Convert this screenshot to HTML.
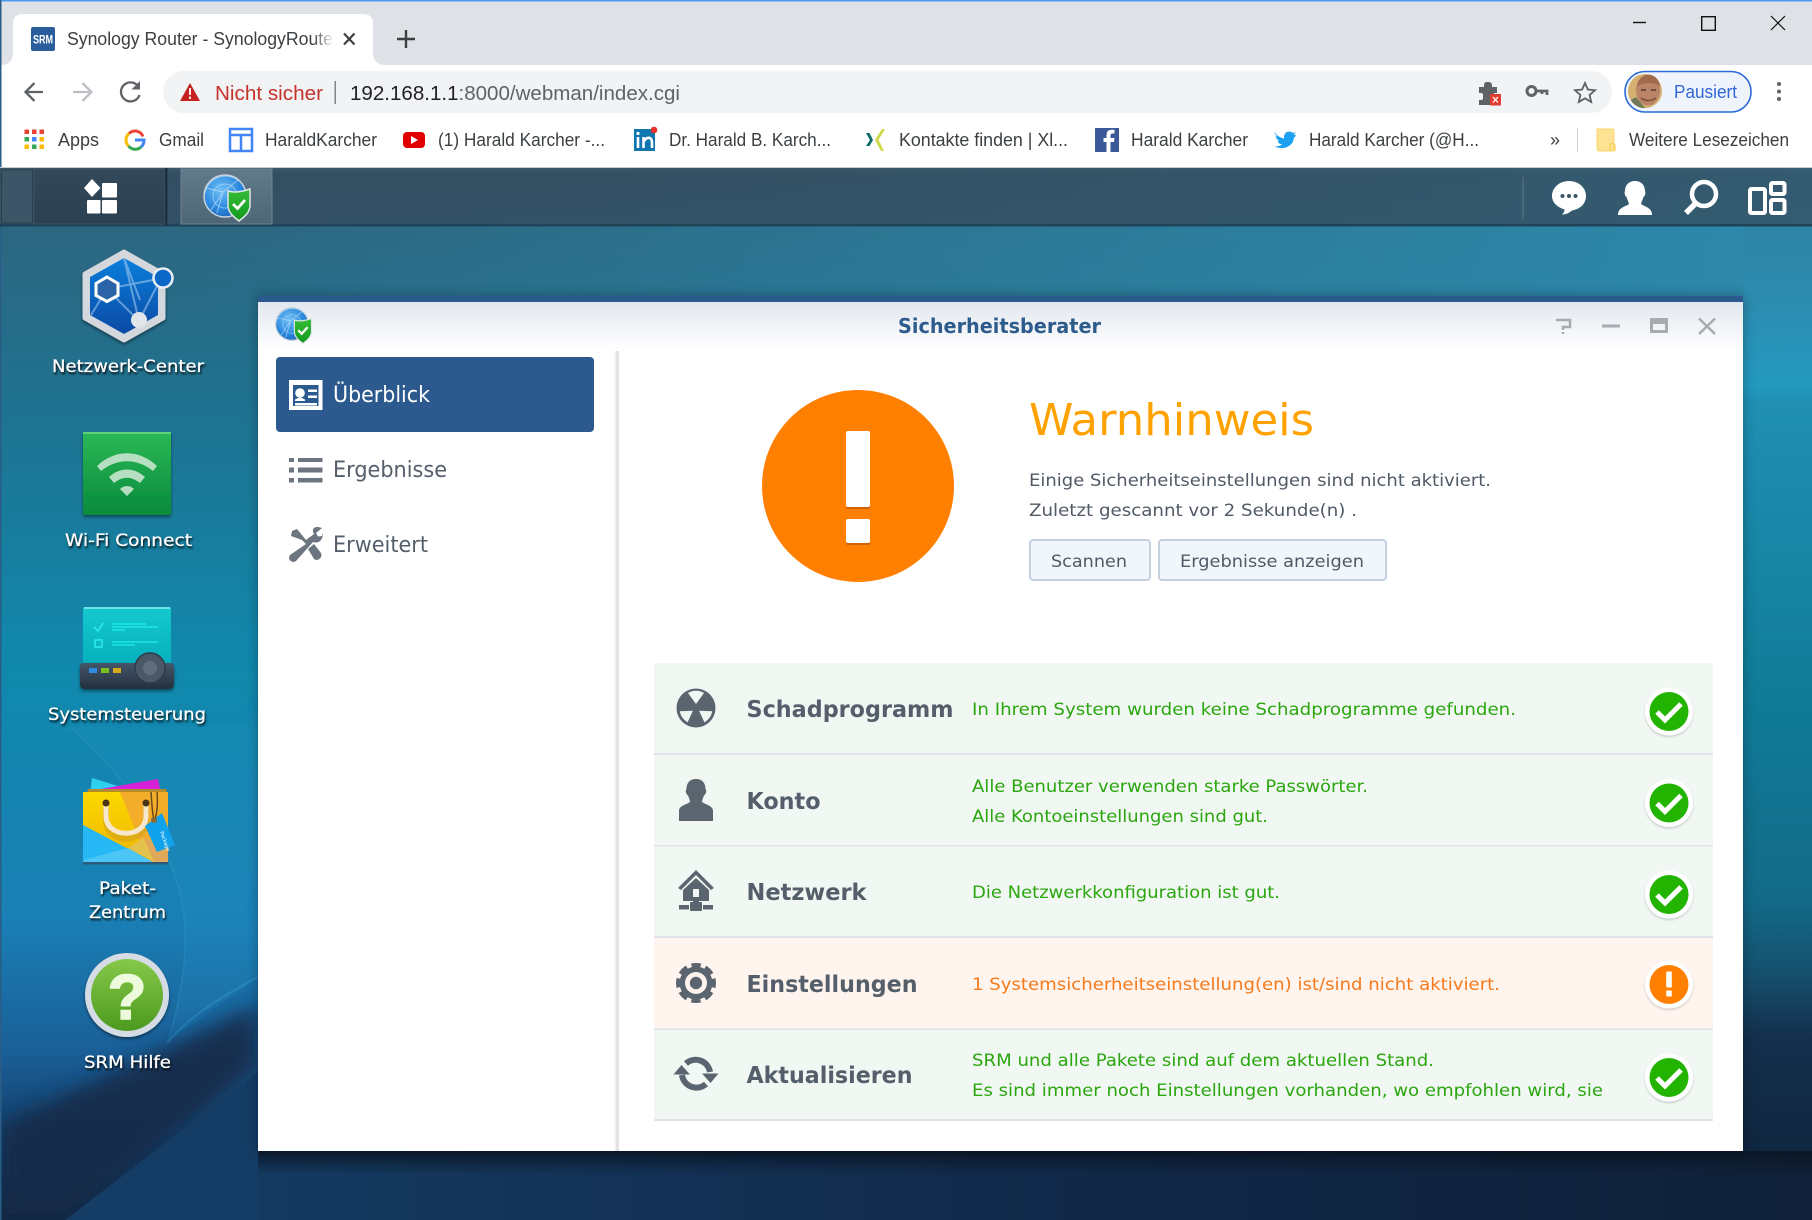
<!DOCTYPE html>
<html><head><meta charset="utf-8"><title>Synology Router - SynologyRouter</title>
<style>
html,body{margin:0;padding:0;width:1812px;height:1220px;overflow:hidden;background:#10263f}
svg{display:block}
text{white-space:pre}
.c{font-family:"Liberation Sans",sans-serif;font-size:18px;fill:#3c4043}
.d{font-family:"DejaVu Sans",sans-serif}
.l{font-family:"DejaVu Sans",sans-serif;font-size:17px;fill:#fff;stroke:#fff;stroke-width:.25px;text-anchor:start;filter:drop-shadow(1px 2px 1px rgba(0,0,0,.85))}
.n{font-family:"DejaVu Sans",sans-serif;font-weight:700;font-size:23px;fill:#555f6b}
.g{font-family:"DejaVu Sans",sans-serif;font-size:17px;fill:#2ba60f}
.s{font-family:"DejaVu Sans",sans-serif;font-size:22px;fill:#555f6b}
.b{font-family:"DejaVu Sans",sans-serif;font-size:17px;fill:#505a66}
</style></head><body>
<svg xmlns="http://www.w3.org/2000/svg" width="1812" height="1220" viewBox="0 0 1812 1220">
<defs>
<linearGradient id="bg" x1="0" y1="226" x2="0" y2="1220" gradientUnits="userSpaceOnUse">
<stop offset="0" stop-color="#2d6680"/><stop offset=".18" stop-color="#1f7290"/><stop offset=".45" stop-color="#1089ad"/><stop offset=".7" stop-color="#1a7fb5"/><stop offset=".83" stop-color="#1a5f98"/><stop offset=".93" stop-color="#123a62"/><stop offset="1" stop-color="#10263f"/>
</linearGradient>
<linearGradient id="rt" x1="0" y1="226" x2="0" y2="1160" gradientUnits="userSpaceOnUse">
<stop offset="0" stop-color="#2e84a5"/><stop offset=".08" stop-color="#2c8cb0"/><stop offset=".17" stop-color="#2499bf"/><stop offset=".19" stop-color="#1f8fb3"/><stop offset=".5" stop-color="#107c98"/><stop offset=".72" stop-color="#126a88"/><stop offset=".8" stop-color="#14506e"/><stop offset=".87" stop-color="#132f4c"/><stop offset="1" stop-color="#10263f"/>
</linearGradient>
<linearGradient id="band" x1="200" y1="0" x2="1743" y2="0" gradientUnits="userSpaceOnUse"><stop offset="0" stop-color="#2d88aa" stop-opacity="0"/><stop offset="1" stop-color="#2d88aa"/></linearGradient>
<linearGradient id="bot" x1="258" y1="0" x2="1812" y2="0" gradientUnits="userSpaceOnUse"><stop offset="0" stop-color="#143a60"/><stop offset=".5" stop-color="#11294a"/><stop offset="1" stop-color="#0f2038"/></linearGradient>
<linearGradient id="botd" x1="0" y1="1151" x2="0" y2="1175" gradientUnits="userSpaceOnUse"><stop offset="0" stop-color="#0b1422" stop-opacity=".8"/><stop offset="1" stop-color="#0b1422" stop-opacity="0"/></linearGradient>
<linearGradient id="bar" x1="0" y1="168" x2="0" y2="226" gradientUnits="userSpaceOnUse"><stop offset="0" stop-color="#3b5769"/><stop offset=".1" stop-color="#334e62"/><stop offset="1" stop-color="#335166"/></linearGradient>
<linearGradient id="barR" x1="0" y1="0" x2="1812" y2="0" gradientUnits="userSpaceOnUse"><stop offset="0" stop-color="#33505f" stop-opacity="0"/><stop offset="1" stop-color="#356077" stop-opacity=".7"/></linearGradient>
<linearGradient id="menu" x1="0" y1="168" x2="0" y2="226" gradientUnits="userSpaceOnUse"><stop offset="0" stop-color="#33495a"/><stop offset="1" stop-color="#2b4050"/></linearGradient>
<linearGradient id="act" x1="0" y1="168" x2="0" y2="226" gradientUnits="userSpaceOnUse"><stop offset="0" stop-color="#627a8a"/><stop offset="1" stop-color="#4d6676"/></linearGradient>
<linearGradient id="tb" x1="0" y1="302" x2="0" y2="350" gradientUnits="userSpaceOnUse"><stop offset="0" stop-color="#e2e7ef"/><stop offset="1" stop-color="#fff"/></linearGradient>
<linearGradient id="div" x1="614" y1="0" x2="619" y2="0" gradientUnits="userSpaceOnUse"><stop offset="0" stop-color="#fff"/><stop offset=".7" stop-color="#dcdcdc"/><stop offset="1" stop-color="#eee"/></linearGradient>
<radialGradient id="globe" cx=".4" cy=".35" r=".75"><stop offset="0" stop-color="#6fc0f5"/><stop offset=".6" stop-color="#2b88de"/><stop offset="1" stop-color="#1c62b8"/></radialGradient>
<linearGradient id="shield" x1="0" y1="0" x2="0" y2="1"><stop offset="0" stop-color="#35bd37"/><stop offset="1" stop-color="#139a1f"/></linearGradient>
<linearGradient id="hexb" x1="0" y1="0" x2="0" y2="1"><stop offset="0" stop-color="#0a7fdc"/><stop offset="1" stop-color="#0b4aa4"/></linearGradient>
<linearGradient id="wifi" x1="0" y1="0" x2="0" y2="1"><stop offset="0" stop-color="#2cb856"/><stop offset="1" stop-color="#088a3c"/></linearGradient>
<linearGradient id="sys" x1="0" y1="0" x2="0" y2="1"><stop offset="0" stop-color="#15c9cf"/><stop offset="1" stop-color="#05b0bc"/></linearGradient>
<linearGradient id="base" x1="0" y1="0" x2="0" y2="1"><stop offset="0" stop-color="#45566a"/><stop offset="1" stop-color="#232f3e"/></linearGradient>
<linearGradient id="help" x1="0" y1="0" x2="0" y2="1"><stop offset="0" stop-color="#86c84a"/><stop offset="1" stop-color="#4c9a1e"/></linearGradient>
<linearGradient id="bag" x1="0" y1="0" x2="0" y2="1"><stop offset="0" stop-color="#fbd800"/><stop offset="1" stop-color="#efb400"/></linearGradient>
<linearGradient id="fade" x1="0" y1="0" x2="1" y2="0"><stop offset="0" stop-color="#fff" stop-opacity="0"/><stop offset="1" stop-color="#fff"/></linearGradient>
<filter id="blur6" x="-20%" y="-20%" width="140%" height="140%"><feGaussianBlur stdDeviation="6"/></filter>
<filter id="blur12" x="-30%" y="-30%" width="160%" height="160%"><feGaussianBlur stdDeviation="10"/></filter>
<filter id="sh" x="-20%" y="-20%" width="140%" height="140%"><feDropShadow dx="0" dy="1.5" stdDeviation="1" flood-color="#000" flood-opacity=".18"/></filter>
<filter id="ish" x="-20%" y="-20%" width="140%" height="140%"><feDropShadow dx="0" dy="2" stdDeviation="1.5" flood-color="#000" flood-opacity=".45"/></filter>
<g id="ok"><circle r="24" fill="#fff" filter="url(#sh)"/><circle r="19.5" fill="#22b400"/><path d="M-12 .5L-4 8.500L12 -7.500" fill="none" stroke="#fff" stroke-width="5"/></g>
<g id="gs"><circle cx="0" cy="0" r="21" fill="url(#globe)" stroke="#c8d3dc" stroke-width="1.5"/><path d="M-20 -3A21 21 0 0 1 14 -15M-14 14L-2 -4L13 -16M-2 -4L-19 -8M-2 -4L-8 17" fill="none" stroke="#cfe9fb" stroke-width="1" opacity=".6"/><circle r="12" fill="none" stroke="#cfe9fb" stroke-width="1" opacity=".5"/><path d="M3 -5C9 -3 16 -4 25 -7V9C25 17 19 21 14 25C9 21 3 17 3 9Z" fill="url(#shield)" stroke="#dfe5e8" stroke-width="1.5"/><path d="M8 8L12.500 12.500L20 4" fill="none" stroke="#fff" stroke-width="2.800"/></g>
</defs>

<!-- desktop background -->
<rect width="1812" height="1220" fill="url(#bg)"/>
<rect x="200" y="226" width="1543" height="90" fill="url(#band)"/>
<path d="M1743 226H1812V1160H1743Z" fill="url(#rt)"/>
<path d="M70 727C130 780 190 860 185 950C183 985 175 1020 167 1043L258 977V727Z" fill="#2a9bd0" opacity=".16"/>
<path d="M70 727C130 780 190 860 185 950C183 985 175 1020 167 1043" fill="none" stroke="#45b6e2" stroke-width="1.500" opacity=".2"/>
<path d="M258 977C225 995 190 1015 167 1043" fill="none" stroke="#3fb3e0" stroke-width="2" opacity=".3"/>
<path d="M0 1125L258 1005V1070L65 1220H0Z" fill="#12294a" opacity=".92" filter="url(#blur12)"/>
<path d="M65 1220L258 1072V1220Z" fill="#143c64"/>
<rect x="258" y="1151" width="1554" height="69" fill="url(#bot)"/>
<rect x="258" y="1151" width="1554" height="24" fill="url(#botd)"/>
<rect x="0" y="0" width="1.500" height="1220" fill="#2a5d86"/>

<!-- desktop icons -->
<g>
<path d="M124 252L163 274V318L124 340L85 318V274Z" fill="#d4d8dc" stroke="#d4d8dc" stroke-width="5" stroke-linejoin="round" filter="url(#ish)"/>
<path d="M124 258L158 277V315L124 334L90 315V277Z" fill="url(#hexb)"/>
<path d="M124 258L139 321M124 258L140 300M107 289L91 315M107 289L139 321M107 289L163 278M139 321L160 280" fill="none" stroke="#9fc6ec" stroke-width="2" opacity=".6"/>
<path d="M107 277L118 283.500V295.500L107 301.500L96 295.500V283.500Z" fill="#2a64a6" stroke="#fff" stroke-width="3"/>
<circle cx="163" cy="278" r="9.500" fill="#0c68c8" stroke="#e9eef3" stroke-width="2.500"/>
<circle cx="139" cy="320" r="8" fill="#e2e6ea"/>
<text class="l" x="52" y="372" textLength="152" lengthAdjust="spacingAndGlyphs">Netzwerk-Center</text>

<rect x="83" y="432" width="88" height="83" rx="2" fill="url(#wifi)" filter="url(#ish)"/>
<rect x="83" y="432" width="88" height="2" fill="#5ed27e"/>
<path d="M97 466C115 449 139 449 157 466L153 471C137 458 117 458 101 471Z" fill="#b5dfc0"/>
<path d="M109 477C120 467 134 467 145 477L140 483C131 476 123 476 114 483Z" fill="#b5dfc0"/>
<path d="M120 489C124 485 130 485 134 489L127 496Z" fill="#b5dfc0"/>
<text class="l" x="65" y="546" textLength="127" lengthAdjust="spacingAndGlyphs">Wi-Fi Connect</text>

<path d="M85 607H169Q171 607 171 609V665H83V609Q83 607 85 607Z" fill="url(#sys)"/>
<rect x="84" y="607" width="86" height="2" fill="#6be4e6"/>
<path d="M94 627L98 631L103 623" fill="none" stroke="#2ceae8" stroke-width="1.800"/>
<path d="M112 624H146M112 627H158M112 630H125M112 642H158M112 645H135" stroke="#1ff0ee" stroke-width="1.300" fill="none"/>
<rect x="95" y="640" width="7" height="7" fill="none" stroke="#2ceae8" stroke-width="1.600"/>
<path d="M84 663H170Q174 663 174 667V684Q174 689 169 689H85Q80 689 80 684V667Q80 663 84 663Z" fill="url(#base)" filter="url(#ish)"/>
<rect x="89" y="668" width="8" height="5" fill="#2d8be2"/><rect x="101" y="668" width="8" height="5" fill="#79bf1e"/><rect x="113" y="668" width="8" height="5" fill="#d7a71c"/>
<circle cx="150" cy="668" r="15" fill="#4a5868" stroke="#2f3b49" stroke-width="1.500"/><circle cx="150" cy="668" r="7" fill="#5f6d7d"/>
<text class="l" x="48" y="720" textLength="158" lengthAdjust="spacingAndGlyphs">Systemsteuerung</text>

<path d="M92 778L118 786L112 794H90Z" fill="#2fd0ef"/>
<path d="M95 790L158 779L161 794H96Z" fill="#d820d8"/>
<path d="M88 789H166L167 793H87Z" fill="#b58c2b"/>
<rect x="83" y="792" width="85" height="72" rx="1" fill="url(#bag)"/>
<path d="M120 792H168V864H150L144 852Z" fill="#f3ad2b"/>
<path d="M83 825L153 862H83Z" fill="#25b8f4"/>
<path d="M83 860L128 848L153 862H84Z" fill="#4bc6f6"/>
<path d="M128 848L143 838L155 862Z" fill="#e4c24e"/>
<path d="M144 838L168 844V864H155Z" fill="#e0a85a"/>
<rect x="83" y="862" width="85" height="2.500" fill="#2d5a78"/>
<path d="M106 805V816C106 841 146 841 146 816V805" fill="none" stroke="#d2a01a" stroke-width="6" opacity=".6" transform="translate(0,4)"/>
<path d="M106 805V816C106 839 146 839 146 816V805" fill="none" stroke="#f6e7cd" stroke-width="5"/>
<circle cx="106" cy="803" r="3.500" fill="#4a3416"/><circle cx="146" cy="803" r="3.500" fill="#4a3416"/>
<path d="M151 792C152 805 152 812 154 820M157 792C158 805 157 812 155 820" fill="none" stroke="#6a4a18" stroke-width="1.500"/>
<path d="M145 826L162 813L175 845L157 852Z" fill="#10a3ec"/>
<circle cx="154" cy="820" r="3" fill="#8a6a2a"/>
<text class="d" x="0" y="0" font-size="5" fill="#fff" transform="translate(160,832) rotate(70)">Package</text>
<text class="l" x="99" y="894" textLength="57" lengthAdjust="spacingAndGlyphs">Paket-</text>
<text class="l" x="89" y="918" textLength="77" lengthAdjust="spacingAndGlyphs">Zentrum</text>

<circle cx="127" cy="995" r="42" fill="#d6dce4" filter="url(#ish)"/>
<circle cx="127" cy="995" r="36" fill="url(#help)"/>
<text x="127" y="1019" text-anchor="middle" font-family="Liberation Sans,sans-serif" font-weight="700" font-size="64" fill="#edfbdc" stroke="#edfbdc" stroke-width="1.500">?</text>
<text class="l" x="84" y="1068" textLength="87" lengthAdjust="spacingAndGlyphs">SRM Hilfe</text>
</g>

<!-- browser chrome -->
<rect y="0" width="1812" height="168" fill="#fff"/>
<rect y="0" width="1812" height="65" fill="#dee1e6"/>
<rect y="0" width="1812" height="1.500" fill="#4a9bf0"/>
<rect y="0" width="1.500" height="168" fill="#2a5d86"/>
<path d="M1 65Q11 65 13 55V24Q13 14 23 14H363Q373 14 373 24V55Q375 65 385 65Z" fill="#fff"/>
<rect x="31" y="27" width="24" height="24" rx="2" fill="#2a5d9c"/>
<text x="33" y="43.500" font-family="Liberation Sans,sans-serif" font-size="11.500" font-weight="700" fill="#fff" textLength="20" lengthAdjust="spacingAndGlyphs">SRM</text>
<text class="c" x="67" y="45" textLength="266" lengthAdjust="spacingAndGlyphs">Synology Router - SynologyRoute</text>
<rect x="313" y="24" width="21" height="30" fill="url(#fade)"/>
<path d="M344 33.500L354.500 44.500M354.500 33.500L344 44.500" stroke="#3c4043" stroke-width="2.200" fill="none"/>
<path d="M406 30V48M397 39H415" stroke="#3c4043" stroke-width="2.400" fill="none"/>
<path d="M1633 22.500H1646" stroke="#111" stroke-width="1.400"/>
<rect x="1701.700" y="16.700" width="13.600" height="13.600" fill="none" stroke="#111" stroke-width="1.400"/>
<path d="M1771 16L1785 30M1785 16L1771 30" stroke="#111" stroke-width="1.200" fill="none"/>

<path d="M43 92H27M34.500 83L25.500 92L34.500 101" fill="none" stroke="#5f6368" stroke-width="2.300"/>
<path d="M73 92H90M82.500 83L91.500 92L82.500 101" fill="none" stroke="#bcc0c4" stroke-width="2.300"/>
<path d="M138 86A9.500 9.500 0 1 0 139.500 95" fill="none" stroke="#5f6368" stroke-width="2.300"/><path d="M140 81V89.500H131.500Z" fill="#5f6368"/>
<rect x="163" y="71" width="1449" height="42" rx="21" fill="#f1f3f4"/>
<path d="M190 83L200 101H180Z" fill="#c5221f"/><path d="M190 88V95M190 96.500V99" stroke="#fff" stroke-width="1.800"/>
<text class="c" x="215" y="100" style="font-size:20px;fill:#c5332b" textLength="108" lengthAdjust="spacingAndGlyphs">Nicht sicher</text>
<rect x="334.500" y="81" width="1.500" height="23" fill="#80868b"/>
<text class="c" x="350" y="100" style="font-size:20px;fill:#5f6368" textLength="330" lengthAdjust="spacingAndGlyphs"><tspan fill="#202124">192.168.1.1</tspan>:8000/webman/index.cgi</text>
<path d="M1479 87H1484C1484 83 1484 82 1488 82C1492 82 1492 84 1492 87H1497V93C1494 93 1493 93 1493 96.500C1493 100 1494 100 1497 100V105H1479V100C1483 100 1483 100 1483 96.500C1483 93 1483 93 1479 93Z" fill="#5f6368"/>
<rect x="1490" y="94" width="11" height="11.500" fill="#e03c32"/><path d="M1493 97L1498 102.500M1498 97L1493 102.500" stroke="#fff" stroke-width="1.300"/>
<circle cx="1531.500" cy="91" r="4.500" fill="none" stroke="#5f6368" stroke-width="3"/><path d="M1536 91H1547V95M1542 91V94" fill="none" stroke="#5f6368" stroke-width="2.800"/>
<path d="M1585 83L1587.800 89.500L1595 90.200L1589.600 95L1591.200 102L1585 98.300L1578.800 102L1580.400 95L1575 90.200L1582.200 89.500Z" fill="none" stroke="#5f6368" stroke-width="1.800"/>
<rect x="1625" y="71.500" width="126" height="40.500" rx="20" fill="#eef3fc" stroke="#2a6bd6" stroke-width="1.600"/>
<circle cx="1645" cy="91" r="17" fill="#d4b070"/>
<path d="M1631 100C1632 104 1640 109 1645 108L1636 97Z" fill="#6f7858"/>
<ellipse cx="1648" cy="90" rx="12" ry="15.500" fill="#b98468"/>
<path d="M1637 86Q1640 74 1650 75Q1658 76 1660 86Q1650 80 1637 86Z" fill="#a06a4c"/>
<path d="M1641 98Q1648 103 1656 98" stroke="#7a4c34" stroke-width="1.500" fill="none"/>
<path d="M1641 90H1646M1651 90H1656" stroke="#5b3c2a" stroke-width="1.500"/>
<text class="c" x="1674" y="98" style="font-size:18px;fill:#3367d6" textLength="63" lengthAdjust="spacingAndGlyphs">Pausiert</text>
<circle cx="1779" cy="84" r="2" fill="#5f6368"/><circle cx="1779" cy="91.500" r="2" fill="#5f6368"/><circle cx="1779" cy="99" r="2" fill="#5f6368"/>

<!-- bookmarks -->
<g>
<rect x="24.500" y="129.500" width="4.500" height="4.500" fill="#ea4335"/><rect x="32" y="129.500" width="4.500" height="4.500" fill="#ea4335"/><rect x="39.500" y="129.500" width="4.500" height="4.500" fill="#ea4335"/>
<rect x="24.500" y="137" width="4.500" height="4.500" fill="#34a853"/><rect x="32" y="137" width="4.500" height="4.500" fill="#4285f4"/><rect x="39.500" y="137" width="4.500" height="4.500" fill="#fbbc05"/>
<rect x="24.500" y="144.500" width="4.500" height="4.500" fill="#fbbc05"/><rect x="32" y="144.500" width="4.500" height="4.500" fill="#34a853"/><rect x="39.500" y="144.500" width="4.500" height="4.500" fill="#fbbc05"/>
</g>
<text class="c" x="58" y="146" textLength="41" lengthAdjust="spacingAndGlyphs">Apps</text>
<path d="M143 136.500A8.500 8.500 0 0 0 129 133.500" fill="none" stroke="#ea4335" stroke-width="3"/>
<path d="M129 133.500A8.500 8.500 0 0 0 128.500 146" fill="none" stroke="#fbbc05" stroke-width="3"/>
<path d="M128.500 146A8.500 8.500 0 0 0 141 147" fill="none" stroke="#34a853" stroke-width="3"/>
<path d="M141 147A8.500 8.500 0 0 0 144 140H135" fill="none" stroke="#4285f4" stroke-width="3"/>
<text class="c" x="159" y="146" textLength="45" lengthAdjust="spacingAndGlyphs">Gmail</text>
<rect x="230" y="129" width="22" height="22" fill="none" stroke="#4285f4" stroke-width="2.500"/>
<path d="M230 135H252M241 135V151" stroke="#4285f4" stroke-width="2.500" fill="none"/>
<text class="c" x="265" y="146" textLength="112" lengthAdjust="spacingAndGlyphs">HaraldKarcher</text>
<rect x="403" y="132" width="22" height="16" rx="4" fill="#e00000"/><path d="M411 136V144L418 140Z" fill="#fff"/>
<text class="c" x="438" y="146" textLength="167" lengthAdjust="spacingAndGlyphs">(1) Harald Karcher -...</text>
<rect x="634" y="129" width="21" height="22" fill="#0f76b0"/>
<path d="M638 137V148M643.500 148V137M643.500 142Q646 137 650 138Q652 139 652 143V148" fill="none" stroke="#fff" stroke-width="2.600"/><circle cx="638" cy="133.500" r="1.600" fill="#fff"/>
<circle cx="654" cy="130" r="3.300" fill="#e9312b"/>
<text class="c" x="669" y="146" textLength="162" lengthAdjust="spacingAndGlyphs">Dr. Harald B. Karch...</text>
<path d="M882 129L875 140L881 151H884L878.500 140L885 129Z" fill="#cfd848"/><path d="M866 133L870 140L866 146H869.500L873 140L869.500 133Z" fill="#0b6b66"/>
<text class="c" x="899" y="146" textLength="169" lengthAdjust="spacingAndGlyphs">Kontakte finden | Xl...</text>
<rect x="1095" y="128" width="24" height="24" fill="#3b5998"/><path d="M1110.500 152V142H1114L1114.500 138H1110.500V135.500Q1110.500 133.500 1112.500 133.500H1114.500V129.800H1111.500Q1106.500 129.800 1106.500 135V138H1103.500V142H1106.500V152Z" fill="#fff"/>
<text class="c" x="1131" y="146" textLength="117" lengthAdjust="spacingAndGlyphs">Harald Karcher</text>
<g transform="translate(1285,140) scale(.88) translate(-1288,-142)"><path d="M1276 133C1280 138 1284 140 1287 140C1286 134 1292 130 1297 134L1300 133L1298 136.500L1300.500 136C1300 138 1299 139 1298 139.500C1298 148 1287 155 1276 149C1280 149.500 1283 148.500 1285 147C1282 147 1280 145 1279.500 143H1282C1279 142 1277.500 139.500 1277.500 137.500L1280 138C1277 136 1276 134 1276 133Z" fill="#1da1f2"/></g>
<text class="c" x="1309" y="146" textLength="170" lengthAdjust="spacingAndGlyphs">Harald Karcher (@H...</text>
<text class="c" x="1550" y="146">»</text>
<rect x="1577" y="128" width="1" height="24" fill="#d0d3d6"/>
<path d="M1597 129H1612Q1614 129 1614 131V151H1599Q1597 151 1597 149Z" fill="#fde293" stroke="#fbd76a" stroke-width="1"/>
<path d="M1610 151V145Q1612 142 1615 145V151" fill="none" stroke="#f5c94e" stroke-width="1"/>
<text class="c" x="1629" y="146" textLength="160" lengthAdjust="spacingAndGlyphs">Weitere Lesezeichen</text>
<rect y="167" width="1812" height="1" fill="#c9ccd0"/>

<!-- DSM taskbar -->
<rect y="168" width="1812" height="58" fill="url(#bar)"/>
<rect y="168" width="1812" height="58" fill="url(#barR)"/>
<rect y="224" width="1812" height="2.500" fill="#1f4358"/>
<rect x="1.500" y="170" width="31" height="53" fill="#3d5566" stroke="#2b3f4d" stroke-width="1"/>
<rect x="34" y="169" width="131" height="55" fill="url(#menu)" stroke="#3d5363" stroke-width="1"/>
<rect x="165" y="168" width="2.500" height="58" fill="#1e3140"/>
<rect x="181" y="169" width="91" height="55" fill="url(#act)" stroke="#6d8493" stroke-width="1"/>
<path d="M92 179L100.500 188L92 197L84 188Z" fill="#fff"/>
<rect x="102" y="183" width="15" height="14.500" rx="1" fill="#fff"/>
<rect x="87" y="200" width="13.500" height="13.500" rx="1" fill="#fff"/>
<rect x="102" y="200" width="15" height="13.500" rx="1" fill="#fff"/>
<use href="#gs" transform="translate(225,196)"/>
<rect x="1522.500" y="177" width="1.200" height="42" fill="#5a7384"/>
<path d="M1569 181C1579 181 1586 188 1586 196C1586 204 1580 209 1572 210.500C1569 213 1566 214.500 1562 214.500C1564 212.500 1564.500 211 1564.500 209.500C1557 207 1552 202.500 1552 196C1552 188 1559 181 1569 181Z" fill="#fff"/>
<circle cx="1562.500" cy="196" r="2" fill="#3a5568"/><circle cx="1569" cy="196" r="2" fill="#3a5568"/><circle cx="1575.500" cy="196" r="2" fill="#3a5568"/>
<path d="M1635 181C1642 181 1645 186 1645 191C1646 193 1645 196 1643.500 197C1642.500 200 1641.500 202 1641 204C1645 207 1652 207.500 1652 215H1618C1618 207.500 1625 207 1629 204C1628.500 202 1627.500 200 1626.500 197C1625 196 1624 193 1625 191C1625 186 1628 181 1635 181Z" fill="#fff"/>
<circle cx="1704" cy="194" r="12" fill="none" stroke="#fff" stroke-width="4.500"/>
<path d="M1696 203L1686 213" stroke="#fff" stroke-width="5.500"/>
<rect x="1750" y="189" width="15" height="24" rx="1.500" fill="none" stroke="#fff" stroke-width="4"/>
<rect x="1771" y="183" width="13.500" height="11" rx="1.500" fill="none" stroke="#fff" stroke-width="4"/>
<rect x="1771" y="200" width="13.500" height="13" rx="1.500" fill="none" stroke="#fff" stroke-width="4"/>

<!-- window -->
<rect x="258" y="296" width="1485" height="855" fill="#000" opacity=".3" filter="url(#blur6)"/>
<rect x="258" y="296" width="1485" height="855" fill="#fff"/>
<rect x="258" y="296" width="1485" height="6" fill="#2c5a8e"/>
<rect x="258" y="302" width="1485" height="48" fill="url(#tb)"/>
<use href="#gs" transform="translate(292,324) scale(.78)"/>
<text class="d" x="898" y="333" font-size="20" font-weight="700" fill="#2d5c8c" textLength="203" lengthAdjust="spacingAndGlyphs">Sicherheitsberater</text>
<path d="M1556 320H1570V327H1563V330M1563 332V334" fill="none" stroke="#a7abb0" stroke-width="2.500"/>
<rect x="1602" y="324.500" width="18" height="3" fill="#a7abb0"/>
<path d="M1650 318H1668V333H1650ZM1653 324V330H1665V324Z" fill="#a7abb0" fill-rule="evenodd"/>
<path d="M1699 318.500L1715 334M1715 318.500L1699 334" stroke="#a7abb0" stroke-width="2.500" fill="none"/>
<rect x="614" y="351" width="5" height="800" fill="url(#div)"/>

<rect x="276" y="357" width="318" height="75" rx="4" fill="#2c5a8e"/>
<path d="M289 380H322.500V410H289ZM293 385V406H318.500V385Z" fill="#fff" fill-rule="evenodd"/>
<circle cx="300" cy="393" r="4.800" fill="#fff"/>
<path d="M295 403H317V405.500H295ZM308 389.500H317V392H308ZM308 395.500H317V398H308ZM295 399.500Q300 396 305 399.500V401H295Z" fill="#fff"/>
<text class="s" x="333" y="402" style="fill:#fff" textLength="97" lengthAdjust="spacingAndGlyphs">Überblick</text>
<path d="M289 458H294V462H289ZM298 458H322.500V462H298ZM289 467.500H294V472.500H289ZM298 467.500H322.500V472.500H298ZM289 478H294V482.500H289ZM298 478H322.500V482.500H298Z" fill="#6d7680"/>
<text class="s" x="333" y="477" textLength="114" lengthAdjust="spacingAndGlyphs">Ergebnisse</text>
<path d="M292 531L297 529L306 540L314 534C311 529 314 525 322 528L316 533L318 536.500L322 536L323 533C323 540 319 544 313 542L296 561C292 564 287 559 290 555L306 544L302 540L291 536Z" fill="#6d7680"/>
<path d="M308 549L314 544L321 553C323 557 318 562 314 559Z" fill="#6d7680"/>
<text class="s" x="333" y="552" textLength="95" lengthAdjust="spacingAndGlyphs">Erweitert</text>

<circle cx="858" cy="486" r="96" fill="#ff8000"/>
<rect x="846" y="431" width="24" height="78" rx="2" fill="#cf6400"/><rect x="846" y="431" width="24" height="76" rx="2" fill="#fff"/>
<rect x="846" y="519" width="24" height="26" rx="2" fill="#cf6400"/><rect x="846" y="519" width="24" height="24" rx="2" fill="#fff"/>
<text class="d" x="1029" y="435" font-size="44" fill="#ffa200" textLength="285" lengthAdjust="spacingAndGlyphs">Warnhinweis</text>
<text class="b" x="1029" y="486" textLength="462" lengthAdjust="spacingAndGlyphs">Einige Sicherheitseinstellungen sind nicht aktiviert.</text>
<text class="b" x="1029" y="516" textLength="328" lengthAdjust="spacingAndGlyphs">Zuletzt gescannt vor 2 Sekunde(n) .</text>
<rect x="1030" y="540" width="120" height="40" rx="3" fill="#f1f6fb" stroke="#c6d1df" stroke-width="2"/>
<rect x="1159" y="540" width="227" height="40" rx="3" fill="#f1f6fb" stroke="#c6d1df" stroke-width="2"/>
<text class="b" x="1051" y="567" textLength="76" lengthAdjust="spacingAndGlyphs">Scannen</text>
<text class="b" x="1180" y="567" textLength="184" lengthAdjust="spacingAndGlyphs">Ergebnisse anzeigen</text>

<!-- rows -->
<rect x="654" y="663" width="1059" height="456" fill="#f1f8f3"/>
<rect x="654" y="938" width="1059" height="91" fill="#fff5ee"/>
<rect x="654" y="753" width="1059" height="2" fill="#e0e3ea"/>
<rect x="654" y="845" width="1059" height="1.500" fill="#e0e3ea"/>
<rect x="654" y="936" width="1059" height="2" fill="#e0e3ea"/>
<rect x="654" y="1028.500" width="1059" height="1.500" fill="#dfe3ee"/>
<rect x="654" y="1119" width="1059" height="2" fill="#e0e3ea"/>

<circle cx="696" cy="708" r="19.500" fill="#5a6570"/>
<path d="M696 704L688 693A15.500 15.500 0 0 1 704 693Z" fill="#f1f8f3"/>
<path d="M692.500 711L680 711.500A16 16 0 0 0 687.500 722Z" fill="#f1f8f3" stroke="#f1f8f3" stroke-width=".5"/>
<path d="M699.500 711L712 711.500A16 16 0 0 1 704.500 722Z" fill="#f1f8f3" stroke="#f1f8f3" stroke-width=".5"/>

<path d="M696 779C703 779 705.500 784 705.500 789C707 791 706 794 704 795.500C703 798 702 800 702 802C706 805 713 805.500 713 811V821H679V811C679 805.500 686 805 690 802C690 800 689 798 688 795.500C686 794 685 791 686.500 789C686.500 784 689 779 696 779Z" fill="#5a6570"/>

<path d="M696 870L714 888L711 890L696 875L681 890L678 888Z" fill="#5a6570"/>
<path d="M683 890L696 878L709 890V901H699V905H693V901H683ZM693 889V897H699V889Z" fill="#5a6570" fill-rule="evenodd"/>
<rect x="679" y="905" width="10" height="4.500" fill="#5a6570"/><rect x="703" y="905" width="10" height="4.500" fill="#5a6570"/>
<rect x="690" y="902" width="12" height="9" rx="1" fill="#5a6570"/>

<!-- gear -->
<circle cx="696" cy="983" r="16.500" fill="#5a6570"/>
<circle cx="696" cy="983" r="17.500" fill="none" stroke="#5a6570" stroke-width="5" stroke-dasharray="9 4.740" stroke-dashoffset="4.500"/>
<circle cx="696" cy="983" r="11" fill="#fff5ee"/>
<circle cx="696" cy="983" r="6.200" fill="#5a6570"/>

<!-- refresh -->
<path d="M686 1063.500A14.500 14.500 0 0 1 710 1072" fill="none" stroke="#5a6570" stroke-width="6"/>
<path d="M702 1073.500H718.500L710.500 1083Z" fill="#5a6570"/>
<path d="M706 1084A14.500 14.500 0 0 1 682 1075" fill="none" stroke="#5a6570" stroke-width="6"/>
<path d="M673.500 1074.500H690L681.500 1065Z" fill="#5a6570"/>

<text class="n" x="746.500" y="717" textLength="207" lengthAdjust="spacingAndGlyphs">Schadprogramm</text>
<text class="n" x="746.500" y="809" textLength="74" lengthAdjust="spacingAndGlyphs">Konto</text>
<text class="n" x="746.500" y="900" textLength="120" lengthAdjust="spacingAndGlyphs">Netzwerk</text>
<text class="n" x="746.500" y="992" textLength="171" lengthAdjust="spacingAndGlyphs">Einstellungen</text>
<text class="n" x="746.500" y="1083" textLength="166" lengthAdjust="spacingAndGlyphs">Aktualisieren</text>

<text class="g" x="972" y="715" textLength="544" lengthAdjust="spacingAndGlyphs">In Ihrem System wurden keine Schadprogramme gefunden.</text>
<text class="g" x="972" y="792" textLength="396" lengthAdjust="spacingAndGlyphs">Alle Benutzer verwenden starke Passwörter.</text>
<text class="g" x="972" y="822" textLength="296" lengthAdjust="spacingAndGlyphs">Alle Kontoeinstellungen sind gut.</text>
<text class="g" x="972" y="898" textLength="308" lengthAdjust="spacingAndGlyphs">Die Netzwerkkonfiguration ist gut.</text>
<text class="g" x="972" y="990" style="fill:#f57a1e" textLength="528" lengthAdjust="spacingAndGlyphs">1 Systemsicherheitseinstellung(en) ist/sind nicht aktiviert.</text>
<text class="g" x="972" y="1066" textLength="462" lengthAdjust="spacingAndGlyphs">SRM und alle Pakete sind auf dem aktuellen Stand.</text>
<text class="g" x="972" y="1096" textLength="631" lengthAdjust="spacingAndGlyphs">Es sind immer noch Einstellungen vorhanden, wo empfohlen wird, sie</text>

<use href="#ok" transform="translate(1669,711.500)"/>
<use href="#ok" transform="translate(1669,803)"/>
<use href="#ok" transform="translate(1669,894.500)"/>
<g transform="translate(1669,984.500)"><circle r="24" fill="#fff" filter="url(#sh)"/><circle r="19.500" fill="#ff8000"/><rect x="-2.800" y="-13" width="5.600" height="16" rx="1" fill="#fff"/><rect x="-2.800" y="6" width="5.600" height="6" rx="1" fill="#fff"/></g>
<use href="#ok" transform="translate(1669,1077.500)"/>
</svg>
</body></html>
